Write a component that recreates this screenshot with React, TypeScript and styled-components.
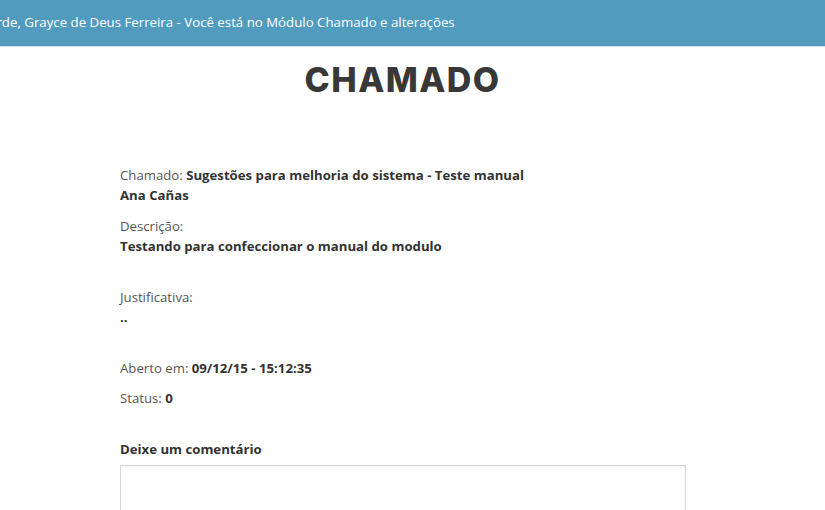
import React from "react";
import styled, { createGlobalStyle } from "styled-components";

const Global = createGlobalStyle`
  html, body { margin: 0; padding: 0; background: #fff; }
  body { font-family: "Open Sans", "Liberation Sans", sans-serif; overflow: hidden; }
`;

const TopBar = styled.header`
  height: 46px;
  background: #519bbf;
  border-bottom: 1px solid #cfe3ee;
  display: flex;
  align-items: center;
  overflow: hidden;
`;

const Greeting = styled.span`
  color: #fff;
  font-size: 13.25px;
  white-space: nowrap;
  margin-left: -43px;
  margin-top: -2px;
`;

const Title = styled.h1`
  margin: 13px 0 0;
  padding-right: 20px;
  text-align: center;
  font-family: Inter, "Liberation Sans", sans-serif;
  font-weight: 800;
  font-size: 34px;
  letter-spacing: 1.4px;
  color: #383838;
  line-height: 40px;
`;

const Content = styled.main`
  padding: 65px 0 0 120px;
  width: 566px;
  font-size: 13.2px;
  color: #555;
`;

const Line = styled.div<{ $gap?: number }>`
  line-height: 20px;
  margin-top: ${(p) => p.$gap ?? 0}px;
`;

const Strong = styled.b`
  color: #333;
  font-weight: 700;
`;

const CommentLabel = styled.div`
  margin-top: 31px;
  line-height: 20px;
  font-weight: 700;
  color: #333;
`;

const TextArea = styled.div`
  margin-top: 6px;
  height: 80px;
  border: 1px solid #d6d6d6;
  box-shadow: inset 0 1px 2px rgba(0,0,0,0.05);
`;

export default function App() {
  return (
    <>
      <Global />
      <TopBar>
        <Greeting>Boa tarde, Grayce de Deus Ferreira - Você está no Módulo Chamado e alterações</Greeting>
      </TopBar>
      <Title>CHAMADO</Title>
      <Content>
        <Line>
          Chamado: <Strong>Sugestões para melhoria do sistema - Teste manual</Strong>
        </Line>
        <Line><Strong>Ana Cañas</Strong></Line>
        <Line $gap={11}>Descrição:</Line>
        <Line><Strong>Testando para confeccionar o manual do modulo</Strong></Line>
        <Line $gap={31}>Justificativa:</Line>
        <Line><Strong>..</Strong></Line>
        <Line $gap={31}>
          Aberto em: <Strong>09/12/15 - 15:12:35</Strong>
        </Line>
        <Line $gap={10}>
          Status: <Strong>0</Strong>
        </Line>
        <CommentLabel>Deixe um comentário</CommentLabel>
        <TextArea />
      </Content>
    </>
  );
}
